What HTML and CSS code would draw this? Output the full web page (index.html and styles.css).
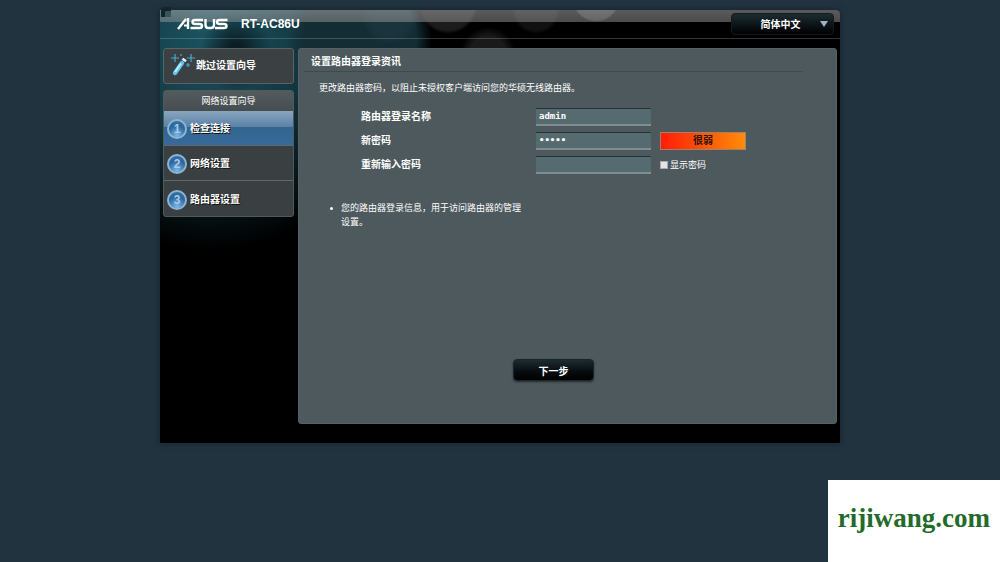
FILE: index.html
```html
<!DOCTYPE html>
<html lang="zh-CN">
<head>
<meta charset="utf-8">
<meta name="viewport" content="width=device-width, initial-scale=1">
<title>ASUS RT-AC86U</title>
<link rel="stylesheet" href="styles.css">
</head>
<body>
<div class="shell">
  <header class="header">
    <svg class="corner" viewBox="0 0 10 10" aria-hidden="true"><path d="M0 10V4q0-4 4-4h6v4H6q-2 0-2 2v4z" fill="#14242b"/><path d="M4 10V6q0-2 2-2h4v6z" fill="#36545d"/></svg>
    <svg class="logo" viewBox="0 0 51 12" role="img" aria-label="ASUS">
      <g fill="none" stroke="#fff" stroke-width="2.4">
        <path d="M1 11L9 1"/>
        <path d="M11 0V11"/>
        <path d="M7 7.500h3" stroke-width="2"/>
        <path d="M26 2h-8q-2.500 0-2.500 2t2.500 2h4.500q2.500 0 2.500 2t-2.500 2h-9"/>
        <path d="M28.500 1v6q0 3 3 3h2.500q3 0 3-3V1"/>
        <path d="M50.500 2h-8q-2.500 0-2.500 2t2.500 2h4.500q2.500 0 2.500 2t-2.500 2h-9"/>
      </g>
    </svg>
    <h1 class="model">RT-AC86U</h1>
    <div class="language">
      <select class="language-select" aria-label="语言"><option>简体中文</option></select>
      <svg class="language-arrow" viewBox="0 0 8 6" aria-hidden="true"><path d="M0 0h8L4 6z" fill="#9fb3c8"/></svg>
    </div>
  </header>
  <div class="body">
    <nav class="sidebar">
      <a class="skip" href="#skip">
        <svg class="wand" viewBox="0 0 24 24" aria-hidden="true">
          <path d="M4 20L11 10" stroke="#5cc4f0" stroke-width="4.500" stroke-linecap="round"/>
          <path d="M4 19L10 10.500" stroke="#b9ecff" stroke-width="2"/>
          <path d="M12.500 8L14 6" stroke="#d8f4ff" stroke-width="4.500"/>
          <path d="M4 1v8M0 5h8M20 1v8M16 5h8M17 10v4M15 12h4M10 1v2" stroke="#45a9d8" stroke-width="1.200"/>
        </svg>
        跳过设置向导
      </a>
      <section class="wizard">
        <h2 class="wizard-title">网络设置向导</h2>
        <ol class="steps">
          <li><a class="step step-active" href="#connection" aria-current="step"><span class="step-number">1</span>检查连接</a></li>
          <li><a class="step" href="#network"><span class="step-number">2</span>网络设置</a></li>
          <li><a class="step" href="#router"><span class="step-number">3</span>路由器设置</a></li>
        </ol>
      </section>
    </nav>
    <main class="main">
      <h2 class="title">设置路由器登录资讯</h2>
      <p class="intro">更改路由器密码，以阻止未授权客户端访问您的华硕无线路由器。</p>
      <form class="login">
        <div class="fields">
          <label class="label" for="name">路由器登录名称</label>
          <input class="field" id="name" type="text" value="admin">
          <span></span>
          <label class="label" for="password">新密码</label>
          <input class="field" id="password" type="password" value="admin">
          <output class="strength" for="password">很弱</output>
          <label class="label" for="confirm">重新输入密码</label>
          <input class="field" id="confirm" type="password">
          <label class="show"><input class="show-box" type="checkbox">显示密码</label>
        </div>
        <ul class="notes">
          <li>您的路由器登录信息，用于访问路由器的管理<br>设置。</li>
        </ul>
        <button class="next" type="button">下一步</button>
      </form>
    </main>
  </div>
</div>
<aside class="watermark">rijiwang.com</aside>
</body>
</html>
```
FILE: styles.css
```css
* {
  box-sizing: border-box;
}

body {
  margin: 0;
  padding: 10px 16px 16px;
  min-height: 100vh;
  background: #21333f;
  color: #fff;
  font-family: "Liberation Sans", "Noto Sans CJK SC", sans-serif;
  font-size: 9px;
  line-height: 14px;
}

h1, h2, p, ol, ul {
  margin: 0;
  padding: 0;
}

a {
  color: inherit;
  text-decoration: none;
}

.shell {
  max-width: 680px;
  margin: 0 auto;
  padding-bottom: 19px;
  border-radius: 0 4px 0 0;
  background:
    radial-gradient(circle at 230px 6px, rgba(32, 58, 70, 0.5) 0 20px, transparent 28px),
    radial-gradient(circle at 288px -6px, #1d1b1b 0 26px, transparent 30px),
    radial-gradient(circle at 328px 44px, #1a1a1a 0 18px, transparent 27px),
    radial-gradient(circle at 376px 0, #111 0 20px, transparent 24px),
    radial-gradient(circle at 436px -12px, #333 0 22px, transparent 24px),
    radial-gradient(ellipse 36px 40px at 76px 42px, #0b1d24 0 20%, transparent),
    radial-gradient(circle at 200px 30px, #142d35 0 56px, transparent 72px),
    radial-gradient(ellipse 200px 220px at 50px 20px, #1b5561 0, #143a44 45%, transparent),
    #000;
  box-shadow: 0 0 6px #14222b;
}

.header {
  position: relative;
  display: flex;
  align-items: center;
  height: 29px;
  padding: 0 6px 0 17px;
  border-bottom: 1px solid rgba(160, 175, 175, 0.3);
  border-radius: 0 4px 0 0;
  background: linear-gradient(rgba(180, 180, 180, 0.5), rgba(150, 150, 150, 0.5)) top / 100% 12px no-repeat;
}

.corner {
  position: absolute;
  top: -3px;
  left: 1px;
  width: 10px;
  height: 10px;
}

.logo {
  width: 51px;
  height: 12px;
}

.model {
  margin-left: 13px;
  font-size: 12px;
}

.language {
  position: relative;
  width: 103px;
  margin-left: auto;
}

.language-select {
  display: block;
  width: 100%;
  height: 22px;
  padding: 0 4px 0 0;
  appearance: none;
  border: 1px solid #101c20;
  border-radius: 4px;
  background: linear-gradient(#1d2c31, #070d10 70%, #000);
  color: #fff;
  font: bold 10px "Liberation Sans", "Noto Sans CJK SC", sans-serif;
  text-align-last: center;
}

.language-arrow {
  position: absolute;
  top: 8px;
  right: 6px;
  width: 8px;
  height: 6px;
  pointer-events: none;
}

.body {
  display: flex;
  gap: 4px;
  padding: 9px 3px 0;
}

.sidebar {
  flex: 0 0 131px;
}

.skip {
  display: flex;
  align-items: center;
  gap: 1px;
  height: 36px;
  padding-left: 7px;
  border: 1px solid #5b6264;
  border-radius: 3px;
  background: #3b4042;
  font-size: 10px;
  font-weight: bold;
}

.wand {
  width: 24px;
  height: 24px;
  margin-bottom: 3px;
  fill: none;
}

.wizard {
  margin-top: 6px;
  border: 1px solid #52595c;
  border-radius: 3px;
  background: #3a4042;
  overflow: hidden;
}

.wizard-title {
  padding: 3px 0;
  background: linear-gradient(#535b5f, #464d50);
  font-size: 9px;
  font-weight: normal;
  text-align: center;
}

.steps {
  list-style: none;
}

.step {
  display: flex;
  align-items: center;
  gap: 3px;
  height: 35px;
  padding: 2px 0 0 3px;
  border-bottom: 1px solid #60676a;
  font-size: 10px;
  font-weight: bold;
  text-shadow: 1px 1px 0 #111;
}

.steps li:last-child .step {
  border-bottom: 0;
}

.step-active {
  background: linear-gradient(#8aa5bd, #5b82a8 46%, #33658f 47%, #376a9b);
}

.step-number {
  display: grid;
  place-items: center;
  width: 20px;
  height: 20px;
  border: 2px solid #8db4d2;
  border-radius: 50%;
  background: radial-gradient(circle at 50% 90%, #7ab8e8, #2a669c 60%, #3b78aa);
  color: #a9cbe6;
  font-size: 12px;
  text-shadow: none;
}

.main {
  flex: 1;
  min-width: 0;
  min-height: 375px;
  padding: 6px 33px 42px 5px;
  border: 1px solid #566165;
  border-radius: 3px;
  background: #4d595d;
}

.title {
  padding: 0 7px 2px;
  border-bottom: 1px solid #3f4a4e;
  font-size: 10px;
}

.intro {
  margin: 9px 0 0 15px;
}

.login {
  display: flex;
  flex-direction: column;
}

.fields {
  display: grid;
  grid-template-columns: 166px 115px 86px;
  column-gap: 9px;
  row-gap: 6px;
  align-items: center;
  margin: 13px 0 0 57px;
}

.label {
  font-size: 10px;
  font-weight: bold;
}

.field {
  width: 100%;
  height: 18px;
  padding: 0 3px 2px;
  border: 0;
  border-top: 1px solid #283337;
  border-bottom: 2px solid #7d8e92;
  background: #566b70;
  color: #fff;
  font: bold 9px "DejaVu Sans Mono", monospace;
}

.strength {
  height: 18px;
  border: 1px solid #a18268;
  background: linear-gradient(90deg, #ff1c08, #ff8c08);
  color: #2b1503;
  font-size: 10px;
  font-weight: bold;
  line-height: 16px;
  text-align: center;
}

.show {
  display: flex;
  align-items: center;
  gap: 2px;
}

.show-box {
  width: 8px;
  height: 8px;
  margin: 0;
  appearance: none;
  border: 1px solid #aaa;
  background: #e4e4e4;
}

.show-box:checked {
  background: #2b6cb0;
}

.notes {
  margin: 27px 0 0 37px;
  list-style: none;
}

.notes li {
  display: flex;
}

.notes li::before {
  flex: none;
  width: 3px;
  height: 3px;
  margin: 6px 8px 0 -11px;
  border-radius: 50%;
  background: #fff;
  content: "";
}

.next {
  width: 81px;
  height: 22px;
  margin: 130px 0 0 209px;
  border: 1px solid #1b2529;
  border-radius: 4px;
  background: linear-gradient(#1d2b30, #060b0e 60%, #000);
  box-shadow: 0 1px 2px #232d31;
  color: #fff;
  font: bold 10px "Liberation Sans", "Noto Sans CJK SC", sans-serif;
}

.watermark {
  position: fixed;
  right: 0;
  bottom: 0;
  padding: 22px 10px 28px;
  background: #fff;
  color: #246b2b;
  font: bold 27px/32px "Liberation Serif", serif;
}
```
